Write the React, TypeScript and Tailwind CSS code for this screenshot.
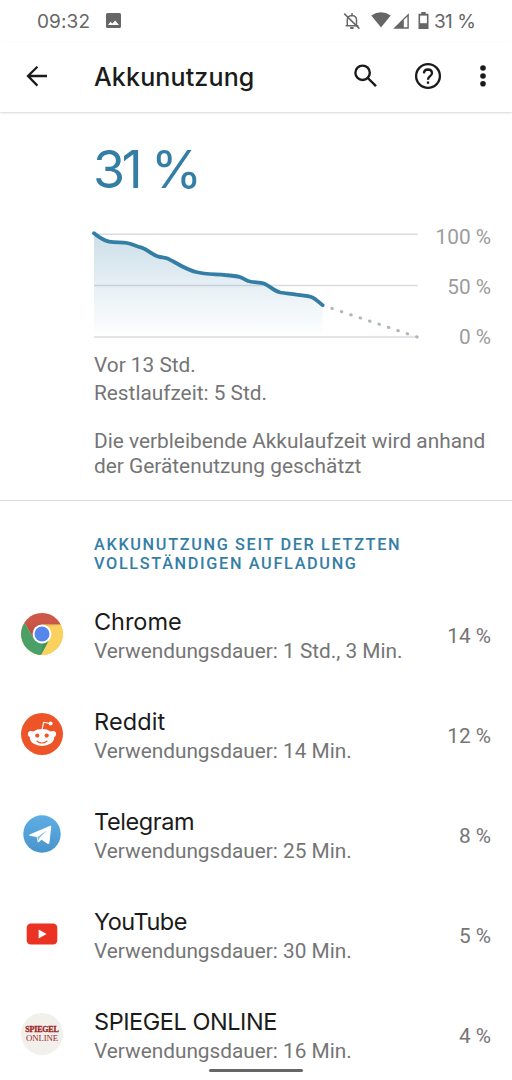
import type { ReactNode } from "react";

interface AppUsage {
  name: string;
  nameClass: string;
  duration: string;
  percent: number;
  icon: ReactNode;
}

function ChromeIcon() {
  return (
    <svg width="42" height="42" viewBox="0 0 42 42">
      <defs>
        <clipPath id="chrome-clip">
          <circle cx="21" cy="21" r="21" />
        </clipPath>
        <linearGradient id="chrome-red" x1="0" y1="0" x2="0" y2="1">
          <stop offset="0.3" stopColor="#cd584a" />
          <stop offset="1" stopColor="#b64a3f" />
        </linearGradient>
      </defs>
      <g clipPath="url(#chrome-clip)">
        <rect width="42" height="42" fill="#f8d15f" />
        <path d="M0 0H42V11.8H21L13 25.5L3.2 9.5Z" fill="url(#chrome-red)" />
        <path d="M3.2 9.5L13 25.5L21 30.2H29L20 42H0V9.5Z" fill="#4aa067" />
        <path d="M29 25.5L19.8 42H42V11.8H21Z" fill="#f8d15f" />
        <path d="M21 11.8H39L29 13.6Z" fill="#ecc05a" />
        <path d="M28 27L19.8 42L21.5 30Z" fill="#419560" />
      </g>
      <circle cx="21" cy="21" r="9.4" fill="#fff" />
      <circle cx="21" cy="21" r="7.5" fill="#5685ec" />
    </svg>
  );
}

function RedditIcon() {
  return (
    <svg width="42" height="42" viewBox="0 0 42 42">
      <circle cx="21" cy="21" r="21" fill="#ed5529" />
      <path
        d="M21 17L22.6 9.3L29 10.5"
        fill="none"
        stroke="#fff"
        strokeWidth="1.1"
        strokeLinejoin="round"
      />
      <circle cx="29.6" cy="10.6" r="2" fill="#fff" />
      <circle cx="10" cy="21" r="3.1" fill="#fff" />
      <circle cx="32" cy="21" r="3.1" fill="#fff" />
      <ellipse cx="21" cy="24.6" rx="12.2" ry="8.5" fill="#fff" />
      <circle cx="16.3" cy="22.6" r="2.1" fill="#ed5529" />
      <circle cx="25.7" cy="22.6" r="2.1" fill="#ed5529" />
      <path
        d="M16 28.2Q21 31.8 26 28.2"
        fill="none"
        stroke="#ed5529"
        strokeWidth="1.1"
        strokeLinecap="round"
      />
    </svg>
  );
}

function TelegramIcon() {
  return (
    <svg width="42" height="42" viewBox="0 0 42 42">
      <defs>
        <linearGradient id="telegram-bg" x1="0" y1="0" x2="0" y2="1">
          <stop offset="0" stopColor="#5eade3" />
          <stop offset="1" stopColor="#4795cc" />
        </linearGradient>
      </defs>
      <circle cx="21" cy="21" r="18.7" fill="url(#telegram-bg)" />
      <path
        d="M8.6 21.4L29.2 12.8Q30.4 12.5 30.3 13.8L28.4 30Q27.9 31.6 26.5 30.8L20.5 26.7L17.6 29.3Q16.8 29.8 16.6 28.6L15.6 24L8.7 22.7Q7.6 22.1 8.6 21.4Z"
        fill="#fff"
      />
      <path d="M16.2 24.2L26 17.2L18.4 25.2L17.4 28Z" fill="#8fc0e2" />
    </svg>
  );
}

function YouTubeIcon() {
  return (
    <svg width="42" height="42" viewBox="0 0 42 42">
      <rect x="5.7" y="10.6" width="30.6" height="21" rx="4.2" fill="#ea3323" />
      <path d="M17.6 16.5L25.6 21L17.6 25.5Z" fill="#fff" />
    </svg>
  );
}

function SpiegelIcon() {
  return (
    <div className="flex size-[42px] flex-col items-center justify-center rounded-full bg-[#f1f0eb] font-['Liberation_Serif',serif] text-[#9c1f26]">
      <span className="text-[8px] leading-[9px] font-bold tracking-[-0.2px] [-webkit-text-stroke:0.3px_#9c1f26]">
        SPIEGEL
      </span>
      <span className="text-[8.8px] leading-[9px] tracking-[-0.1px]">
        ONLINE
      </span>
    </div>
  );
}

const apps: AppUsage[] = [
  {
    name: "Chrome",
    nameClass: "tracking-[-0.05px]",
    duration: "1 Std., 3 Min.",
    percent: 14,
    icon: <ChromeIcon />,
  },
  {
    name: "Reddit",
    nameClass: "tracking-[0.1px]",
    duration: "14 Min.",
    percent: 12,
    icon: <RedditIcon />,
  },
  {
    name: "Telegram",
    nameClass: "tracking-[-0.4px]",
    duration: "25 Min.",
    percent: 8,
    icon: <TelegramIcon />,
  },
  {
    name: "YouTube",
    nameClass: "tracking-[-0.5px]",
    duration: "30 Min.",
    percent: 5,
    icon: <YouTubeIcon />,
  },
  {
    name: "SPIEGEL ONLINE",
    nameClass: "tracking-[-0.45px]",
    duration: "16 Min.",
    percent: 4,
    icon: <SpiegelIcon />,
  },
];

function StatusBar() {
  return (
    <div className="flex h-[42px] items-center pr-[36px] pl-[37px] font-['Inter',sans-serif] text-[19px] text-[#666]">
      <span className="w-[69px] pt-[2px] tracking-[0.1px]">09:32</span>
      <svg className="-mt-px" width="15" height="15" viewBox="0 0 15 15">
        <rect width="15" height="15" rx="1.6" fill="#666" />
        <path d="M2 12L4.6 8.8L6.3 10.6L9.2 7.4L13 12Z" fill="#fff" />
      </svg>
      <div className="ml-auto flex items-center">
        <svg width="18" height="18" viewBox="0 0 18 18" fill="none" stroke="#666" strokeWidth="1.5">
          <path d="M4.3 13.5V8Q4.3 3.8 9 3.6Q13.5 3.8 13.5 8V13.5M2.6 13.8H15.4M9 1V3.6" />
          <path d="M1.2 1.6L16.4 16.6" />
          <path d="M7.2 16H10.6" strokeWidth="2" />
        </svg>
        <svg className="-mt-[2px] ml-[10px]" width="20" height="16" viewBox="0 0 20 16">
          <path d="M0.3 3.6Q10 -3.2 19.7 3.6L10 15.6Z" fill="#666" />
        </svg>
        <svg className="-mt-px ml-[2px]" width="16" height="16" viewBox="0 0 16 16">
          <path d="M0.2 15.7L15.8 0.2V15.7Z" fill="#666" />
          <path d="M10.8 7L14.4 3.4V14.3H10.8Z" fill="#fff" />
        </svg>
        <svg className="-mt-px ml-[9px]" width="11" height="17" viewBox="0 0 11 17">
          <path d="M3.3 0H7.7V1.8H10.5V17H0.5V1.8H3.3Z" fill="#666" />
          <path d="M2.1 3.6H8.9V11.2H2.1Z" fill="#fff" />
        </svg>
        <span className="ml-[5px] flex w-[42px] justify-between pt-[2px] whitespace-nowrap">
          <span className="tracking-[-0.8px]">31</span>
          <span>%</span>
        </span>
      </div>
    </div>
  );
}

function AppBar() {
  return (
    <header className="flex h-[70px] items-center pl-[26px] text-[#1b1b1b] shadow-[0_1px_2px_rgba(0,0,0,0.16)]">
      <svg width="22" height="22" viewBox="0 0 22 22" fill="none" stroke="#1b1b1b" strokeWidth="2.3">
        <path d="M21 10H2M11.4 0.8L2 10L11.4 19.6" />
      </svg>
      <h1 className="ml-[46px] w-[259px] pt-px font-['Inter',sans-serif] text-[25px] font-medium tracking-[0.15px]">
        Akkunutzung
      </h1>
      <svg className="-mt-[2px]" width="24" height="24" viewBox="0 0 24 24" fill="none" stroke="#1b1b1b" strokeWidth="2.4">
        <circle cx="9.6" cy="8.8" r="7.2" />
        <path d="M14.8 14L23 22.2" />
      </svg>
      <svg className="-mt-[2px] ml-[37px]" width="28" height="28" viewBox="0 0 28 28" fill="none" stroke="#1b1b1b" strokeWidth="2.3">
        <circle cx="14" cy="14" r="11.9" />
        <path d="M9.9 11.4Q10.1 7.6 14 7.5Q17.9 7.6 18 11.2Q17.9 13 15.7 14.5Q14 15.8 14 17.8" />
        <path d="M14 19.4V21.8" />
      </svg>
      <svg className="-mt-[2px] ml-[38px]" width="6" height="22" viewBox="0 0 6 22" fill="#1b1b1b">
        <circle cx="3" cy="3" r="2.8" />
        <circle cx="3" cy="11" r="2.8" />
        <circle cx="3" cy="18.8" r="2.8" />
      </svg>
    </header>
  );
}

const curve =
  "M94 233.3C98 236.5 103 240.5 109 241.6C116 243 121 241.8 127 243C132 244 136 246.3 141.7 247.7C148 249.5 152 255 158.5 256.7C162 257.6 164 257 167.5 258.4C173 260.6 184 269 196 272C206 274.6 216 274 225 275C231 275.4 236 275.8 240.5 277.2C244 278.5 246 280.6 250 281.5C255 282.6 260 282 264 283.5C270 286 274 291 280.5 292.5C286 293.6 290 293.6 296.7 294.7C302 295.4 308 295.7 312.5 297.5C316 299 319 302.6 322.7 305.2";

function BatteryChart() {
  return (
    <svg className="-ml-1 shrink-0" width="332" height="114" viewBox="90 228 332 114" fill="none">
      <defs>
        <linearGradient id="chart-fill" x1="0" y1="233" x2="0" y2="337" gradientUnits="userSpaceOnUse">
          <stop offset="0" stopColor="#347ea6" stopOpacity="0.25" />
          <stop offset="1" stopColor="#347ea6" stopOpacity="0" />
        </linearGradient>
      </defs>
      <path d="M94 234.2H418M94 285.5H418M94 337H418" stroke="#dadcdf" strokeWidth="1.5" />
      <path d={`${curve}V337H94Z`} fill="url(#chart-fill)" />
      <path
        d="M331.8 308.4L417.2 337"
        stroke="#afb8be"
        strokeWidth="3"
        strokeLinecap="round"
        strokeDasharray="0.7 9.23"
      />
      <path d={curve} stroke="#347ea6" strokeWidth="3.8" strokeLinecap="round" />
    </svg>
  );
}

function AppRow({ app }: { app: AppUsage }) {
  return (
    <li className="flex h-[100px] items-center pr-[21px] pl-[21px]">
      {app.icon}
      <div className="ml-[31px] flex-1 pt-[6px]">
        <p className={`font-['Inter',sans-serif] text-[23.5px] leading-[28px] text-[#1b1b1b] ${app.nameClass}`}>
          {app.name}
        </p>
        <p className="text-[20.8px] leading-[31px] whitespace-nowrap">
          Verwendungsdauer: {app.duration}
        </p>
      </div>
      <span className="mt-[5px] text-[20.8px]">{app.percent} %</span>
    </li>
  );
}

export default function App() {
  return (
    <div className="relative h-[1080px] w-[512px] overflow-hidden bg-white font-['Roboto',sans-serif] text-[#757575]">
      <StatusBar />
      <AppBar />

      <section className="h-[389px] border-b-[1.5px] border-[#dadada] pl-[94px]">
        <p className="flex w-[108px] justify-between pt-[28px] font-['Inter',sans-serif] text-[52px] leading-[60px] text-[#347ea6]">
          <span className="-ml-px tracking-[-3.5px]">31</span>
          <span>%</span>
        </p>
        <div className="mt-[28px] flex">
          <BatteryChart />
          <div className="-mt-[4px] flex flex-1 flex-col pr-[21px] text-right text-[20.8px] leading-[50px] whitespace-nowrap text-[#9c9c9c]">
            <span className="-mt-[12px]">100 %</span>
            <span>50 %</span>
            <span className="-mb-[20px]">0 %</span>
          </div>
        </div>
        <div className="mt-[9px] text-[20.8px] leading-[28px]">
          <p>Vor 13 Std.</p>
          <p>Restlaufzeit: 5 Std.</p>
        </div>
        <p className="mt-[22px] text-[20.85px] leading-[25px] whitespace-nowrap">
          Die verbleibende Akkulaufzeit wird anhand
          <br />
          der Gerätenutzung geschätzt
        </p>
      </section>

      <h2 className="h-[83px] pt-[34px] pl-[94px] text-[16.3px] leading-[19px] font-medium tracking-[1.65px] whitespace-nowrap text-[#347ea6]">
        AKKUNUTZUNG SEIT DER LETZTEN
        <br />
        VOLLSTÄNDIGEN AUFLADUNG
      </h2>

      <ul>
        {apps.map((app) => (
          <AppRow key={app.name} app={app} />
        ))}
      </ul>

      {/* Gesture navigation handle */}
      <div className="absolute bottom-[8px] left-[209px] h-[3px] w-[94px] rounded-full bg-[#666]" />
    </div>
  );
}
